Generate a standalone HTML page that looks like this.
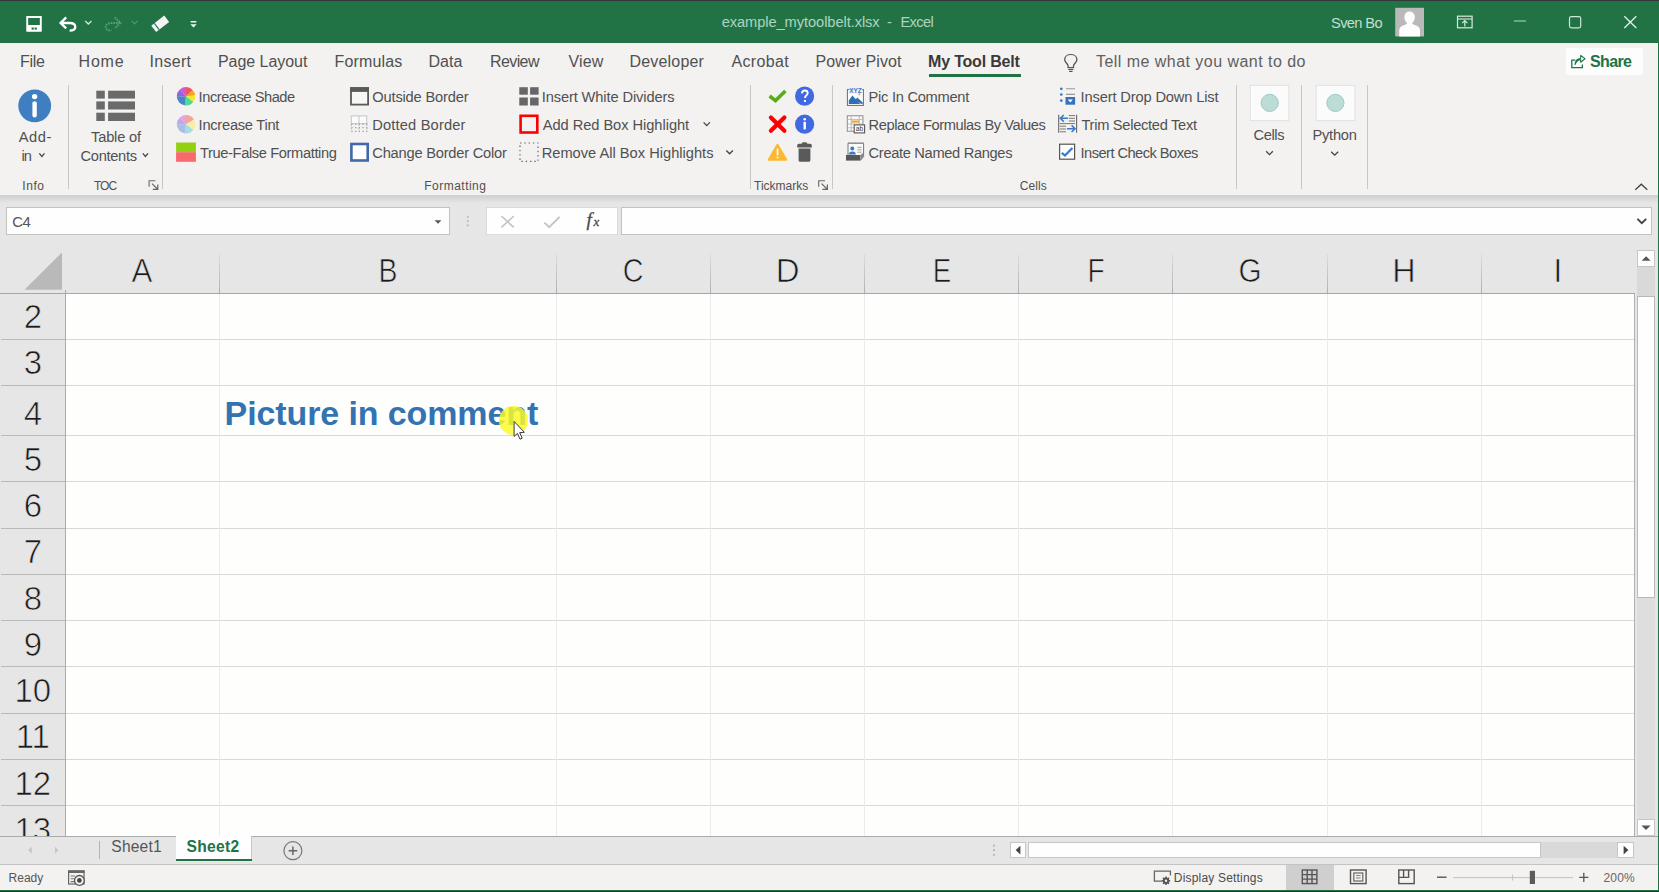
<!DOCTYPE html>
<html><head><meta charset="utf-8"><title>example_mytoolbelt.xlsx - Excel</title>
<style>
html,body{margin:0;padding:0;}
body{width:1659px;height:892px;overflow:hidden;position:relative;background:#e6e6e6;font-family:"Liberation Sans",sans-serif;}
.a{position:absolute;}
.t{position:absolute;white-space:nowrap;line-height:1;}
.c{position:absolute;white-space:nowrap;line-height:1;text-align:center;width:80px;color:#1a1a1a;-webkit-text-stroke:0.7px #e6e6e6;}
svg{position:absolute;overflow:visible;}
</style></head><body>
<div class="a" style="left:0px;top:0px;width:1659px;height:43px;background:#217346;"></div>
<div class="a" style="left:0px;top:0px;width:1659px;height:1px;background:#33363b;"></div>
<div class="a" style="left:0px;top:43px;width:1659px;height:152px;background:#f3f2f1;"></div>
<div class="a" style="left:0px;top:195px;width:1659px;height:8px;background:linear-gradient(#d0d0d0,#d4d4d4 25%,#e6e6e6);"></div>
<div class="a" style="left:1566px;top:48px;width:77px;height:27px;background:#fdfdfd;border-radius:2px;"></div>
<div class="a" style="left:929px;top:74px;width:92px;height:3px;background:#217346;"></div>
<div class="a" style="left:68px;top:85px;width:1px;height:104px;background:#c8c6c4;"></div>
<div class="a" style="left:162px;top:85px;width:1px;height:104px;background:#c8c6c4;"></div>
<div class="a" style="left:750px;top:85px;width:1px;height:104px;background:#c8c6c4;"></div>
<div class="a" style="left:832px;top:85px;width:1px;height:104px;background:#c8c6c4;"></div>
<div class="a" style="left:1236px;top:85px;width:1px;height:104px;background:#c8c6c4;"></div>
<div class="a" style="left:1301px;top:85px;width:1px;height:104px;background:#c8c6c4;"></div>
<div class="a" style="left:1367px;top:85px;width:1px;height:104px;background:#c8c6c4;"></div>
<div class="a" style="left:6px;top:207px;width:444px;height:28px;background:#fefefe;border:1px solid #c2c2c2;box-sizing:border-box;"></div>
<div class="a" style="left:486px;top:207px;width:132px;height:28px;background:#fefefe;border:1px solid #dadada;box-sizing:border-box;"></div>
<div class="a" style="left:621px;top:207px;width:1031px;height:28px;background:#fefefe;border:1px solid #c2c2c2;box-sizing:border-box;"></div>
<div class="a" style="left:66px;top:294px;width:1568px;height:542px;background:#fefefd;"></div>
<div class="a" style="left:66px;top:339px;width:1568px;height:1px;background:#d9d9d9;"></div>
<div class="a" style="left:1px;top:339px;width:64px;height:1px;background:#b9b9b9;"></div>
<div class="a" style="left:66px;top:385px;width:1568px;height:1px;background:#d9d9d9;"></div>
<div class="a" style="left:1px;top:385px;width:64px;height:1px;background:#b9b9b9;"></div>
<div class="a" style="left:66px;top:435px;width:1568px;height:1px;background:#d9d9d9;"></div>
<div class="a" style="left:1px;top:435px;width:64px;height:1px;background:#b9b9b9;"></div>
<div class="a" style="left:66px;top:481px;width:1568px;height:1px;background:#d9d9d9;"></div>
<div class="a" style="left:1px;top:481px;width:64px;height:1px;background:#b9b9b9;"></div>
<div class="a" style="left:66px;top:528px;width:1568px;height:1px;background:#d9d9d9;"></div>
<div class="a" style="left:1px;top:528px;width:64px;height:1px;background:#b9b9b9;"></div>
<div class="a" style="left:66px;top:574px;width:1568px;height:1px;background:#d9d9d9;"></div>
<div class="a" style="left:1px;top:574px;width:64px;height:1px;background:#b9b9b9;"></div>
<div class="a" style="left:66px;top:620px;width:1568px;height:1px;background:#d9d9d9;"></div>
<div class="a" style="left:1px;top:620px;width:64px;height:1px;background:#b9b9b9;"></div>
<div class="a" style="left:66px;top:666px;width:1568px;height:1px;background:#d9d9d9;"></div>
<div class="a" style="left:1px;top:666px;width:64px;height:1px;background:#b9b9b9;"></div>
<div class="a" style="left:66px;top:713px;width:1568px;height:1px;background:#d9d9d9;"></div>
<div class="a" style="left:1px;top:713px;width:64px;height:1px;background:#b9b9b9;"></div>
<div class="a" style="left:66px;top:759px;width:1568px;height:1px;background:#d9d9d9;"></div>
<div class="a" style="left:1px;top:759px;width:64px;height:1px;background:#b9b9b9;"></div>
<div class="a" style="left:66px;top:805px;width:1568px;height:1px;background:#d9d9d9;"></div>
<div class="a" style="left:1px;top:805px;width:64px;height:1px;background:#b9b9b9;"></div>
<div class="a" style="left:219px;top:294px;width:1px;height:542px;background:#ebebeb;"></div>
<div class="a" style="left:219px;top:254px;width:1px;height:39px;background:linear-gradient(#dcdcdc,#b0b0b0);"></div>
<div class="a" style="left:556px;top:294px;width:1px;height:542px;background:#ebebeb;"></div>
<div class="a" style="left:556px;top:254px;width:1px;height:39px;background:linear-gradient(#dcdcdc,#b0b0b0);"></div>
<div class="a" style="left:710px;top:294px;width:1px;height:542px;background:#ebebeb;"></div>
<div class="a" style="left:710px;top:254px;width:1px;height:39px;background:linear-gradient(#dcdcdc,#b0b0b0);"></div>
<div class="a" style="left:864px;top:294px;width:1px;height:542px;background:#ebebeb;"></div>
<div class="a" style="left:864px;top:254px;width:1px;height:39px;background:linear-gradient(#dcdcdc,#b0b0b0);"></div>
<div class="a" style="left:1018px;top:294px;width:1px;height:542px;background:#ebebeb;"></div>
<div class="a" style="left:1018px;top:254px;width:1px;height:39px;background:linear-gradient(#dcdcdc,#b0b0b0);"></div>
<div class="a" style="left:1172px;top:294px;width:1px;height:542px;background:#ebebeb;"></div>
<div class="a" style="left:1172px;top:254px;width:1px;height:39px;background:linear-gradient(#dcdcdc,#b0b0b0);"></div>
<div class="a" style="left:1327px;top:294px;width:1px;height:542px;background:#ebebeb;"></div>
<div class="a" style="left:1327px;top:254px;width:1px;height:39px;background:linear-gradient(#dcdcdc,#b0b0b0);"></div>
<div class="a" style="left:1481px;top:294px;width:1px;height:542px;background:#ebebeb;"></div>
<div class="a" style="left:1481px;top:254px;width:1px;height:39px;background:linear-gradient(#dcdcdc,#b0b0b0);"></div>
<div class="a" style="left:0px;top:293px;width:1635px;height:1px;background:#a6a6a6;"></div>
<div class="a" style="left:65px;top:290px;width:1px;height:546px;background:#ababab;"></div>
<div class="a" style="left:1634px;top:294px;width:1px;height:542px;background:#b0b0b0;"></div>
<svg style="left:0;top:0" width="70" height="295"><polygon points="24.5,289.8 62,252.4 62,289.8" fill="#b9b9b9"/></svg>
<span class="c" style="left:102.4px;top:254.0px;font-size:33.00px;transform:scaleX(0.95);">A</span>
<span class="c" style="left:347.8px;top:254.0px;font-size:33.00px;transform:scaleX(0.86);">B</span>
<span class="c" style="left:593.4px;top:254.0px;font-size:33.00px;transform:scaleX(0.87);">C</span>
<span class="c" style="left:747.6px;top:254.0px;font-size:33.00px;transform:scaleX(1.00);">D</span>
<span class="c" style="left:901.8px;top:254.0px;font-size:33.00px;transform:scaleX(0.84);">E</span>
<span class="c" style="left:1055.9px;top:254.0px;font-size:33.00px;transform:scaleX(0.85);">F</span>
<span class="c" style="left:1210.2px;top:254.0px;font-size:33.00px;transform:scaleX(0.90);">G</span>
<span class="c" style="left:1364.4px;top:254.0px;font-size:33.00px;transform:scaleX(0.98);">H</span>
<span class="c" style="left:1517.9px;top:254.0px;font-size:33.00px;transform:scaleX(1.00);">I</span>
<span class="c" style="left:-7.2px;top:300.0px;font-size:33.00px;">2</span>
<span class="c" style="left:-7.2px;top:346.0px;font-size:33.00px;">3</span>
<span class="c" style="left:-7.2px;top:397.0px;font-size:33.00px;">4</span>
<span class="c" style="left:-7.2px;top:443.0px;font-size:33.00px;">5</span>
<span class="c" style="left:-7.2px;top:489.0px;font-size:33.00px;">6</span>
<span class="c" style="left:-7.2px;top:535.0px;font-size:33.00px;">7</span>
<span class="c" style="left:-7.2px;top:582.0px;font-size:33.00px;">8</span>
<span class="c" style="left:-7.2px;top:628.0px;font-size:33.00px;">9</span>
<span class="c" style="left:-7.2px;top:674.0px;font-size:33.00px;">10</span>
<span class="c" style="left:-7.2px;top:720.0px;font-size:33.00px;">11</span>
<span class="c" style="left:-7.2px;top:767.0px;font-size:33.00px;">12</span>
<span class="c" style="left:-7.2px;top:813.0px;font-size:33.00px;">13</span>
<div class="a" style="left:0px;top:836px;width:1659px;height:28px;background:#e6e6e6;"></div>
<div class="a" style="left:0px;top:836px;width:1659px;height:1px;background:#ababab;"></div>
<div class="a" style="left:0px;top:864px;width:1659px;height:26px;background:#f3f2f1;"></div>
<div class="a" style="left:0px;top:864px;width:1659px;height:1px;background:#c4c4c4;"></div>
<div class="a" style="left:176px;top:836px;width:75px;height:23px;background:#fefefe;border-right:1px solid #c8c8c8;"></div>
<div class="a" style="left:176px;top:859px;width:76px;height:2px;background:#217346;"></div>
<div class="a" style="left:99px;top:841px;width:1px;height:18px;background:#b3b3b3;"></div>
<div class="a" style="left:1286px;top:865px;width:48px;height:25px;background:#cfcfcf;"></div>
<div class="a" style="left:1010px;top:842px;width:16px;height:16px;background:#fefefe;border:1px solid #c6c6c6;box-sizing:border-box;"></div>
<div class="a" style="left:1028px;top:842px;width:513px;height:16px;background:#fefefe;border:1px solid #c6c6c6;box-sizing:border-box;"></div>
<div class="a" style="left:1541px;top:842px;width:76px;height:16px;background:#d9d9d9;"></div>
<div class="a" style="left:1617px;top:842px;width:17px;height:16px;background:#fefefe;border:1px solid #c6c6c6;box-sizing:border-box;"></div>
<div class="a" style="left:1635px;top:250px;width:22px;height:586px;background:#e6e6e6;"></div>
<div class="a" style="left:1637px;top:250px;width:18px;height:17px;background:#fefefe;border:1px solid #c6c6c6;box-sizing:border-box;"></div>
<div class="a" style="left:1637px;top:267px;width:18px;height:29px;background:#d9d9d9;"></div>
<div class="a" style="left:1637px;top:296px;width:18px;height:302px;background:#fefefe;border:1px solid #b9b9b9;box-sizing:border-box;"></div>
<div class="a" style="left:1637px;top:598px;width:18px;height:221px;background:#dedede;"></div>
<div class="a" style="left:1637px;top:819px;width:18px;height:17px;background:#fefefe;border:1px solid #c6c6c6;box-sizing:border-box;"></div>
<div class="a" style="left:1658px;top:43px;width:1px;height:849px;background:#217346;"></div>
<div class="a" style="left:0px;top:890px;width:1659px;height:1px;background:#217346;"></div>
<div class="a" style="left:0px;top:891px;width:1659px;height:1px;background:#2d2e33;"></div>
<!-- title bar icons -->
<svg style="left:0;top:0" width="220" height="43" viewBox="0 0 220 43" fill="none">
<!-- save -->
<rect x="27.2" y="17" width="13.6" height="13.6" stroke="#fff" stroke-width="1.9"/>
<path d="M27,25 H41 V31.5 H27 Z M31.6,27.6 V30.6 H33.8 V27.6 Z M34.6,27.6 V30.6 H36.8 V27.6 Z" fill="#fff" fill-rule="evenodd"/>
<!-- undo -->
<path d="M66.2,17.4 L60.6,23 L66.2,28.4 M60.8,23 H69.5 C74,23 75.3,25.4 75.3,27 C75.3,29 73.6,30.6 69.6,30.6" stroke="#fff" stroke-width="2.3" stroke-linejoin="miter"/>
<path d="M85.2,21 L88.3,24 L91.5,21" stroke="#d4e8dc" stroke-width="1.3"/>
<!-- redo (disabled) -->
<path d="M114.8,17.4 L120.4,23 L114.8,28.4 M120.2,23 H111.5 C107,23 105.7,25.4 105.7,27 C105.7,29 107.4,30.6 111.4,30.6" stroke="#5d9f7b" stroke-width="2" stroke-dasharray="1.6 1"/>
<path d="M131.6,21 L134.5,23.8 L137.4,21" stroke="#4d9370" stroke-width="1.2"/>
<!-- eraser -->
<g transform="rotate(-38 160 24)"><rect x="152" y="20" width="16.5" height="8" fill="#f4f4f4"/><rect x="155.3" y="20" width="1.1" height="8" fill="#217346"/></g>
<!-- customize -->
<rect x="190.6" y="21" width="5.8" height="1.5" fill="#eef6f1"/>
<path d="M190.3,24.2 H196.7 L193.5,27.5 Z" fill="#eef6f1"/>
</svg>
<svg style="left:1390px;top:0" width="269" height="43" viewBox="1390 0 269 43" fill="none">
<!-- avatar -->
<rect x="1395.2" y="7.8" width="28.8" height="28.6" fill="#b9b9b9"/>
<path d="M1409.6,11.6 c3.4,0 5.2,2.6 5.2,5.6 c0,2.6 -1.2,4.6 -2.6,5.6 c0,1.2 0.6,1.6 2.4,2.2 c3.4,1.1 5.2,2.2 5.4,5.4 v6 h-20.8 v-6 c0.2,-3.2 2,-4.3 5.4,-5.4 c1.8,-0.6 2.4,-1 2.4,-2.2 c-1.4,-1 -2.6,-3 -2.6,-5.6 c0,-3 1.8,-5.6 5.2,-5.6 z" fill="#fdfdfd"/>
<!-- ribbon display options -->
<rect x="1457.5" y="16.2" width="14.6" height="11.6" stroke="#d6eadd" stroke-width="1.2"/>
<path d="M1457.5,19 H1472" stroke="#d6eadd" stroke-width="1.1"/>
<path d="M1464.8,26.5 V20.8 M1462.2,23.2 L1464.8,20.6 L1467.4,23.2" stroke="#d6eadd" stroke-width="1.2"/>
<!-- min -->
<path d="M1513.8,21 H1526" stroke="#a9d0b8" stroke-width="1.1"/>
<!-- max -->
<rect x="1569.5" y="16.6" width="11.2" height="11.2" rx="1.8" stroke="#cfe6d8" stroke-width="1.2"/>
<!-- close -->
<path d="M1624.3,16.3 L1636.3,28 M1636.3,16.3 L1624.3,28" stroke="#e3f1e9" stroke-width="1.3"/>
</svg>
<!-- tab row icons -->
<svg style="left:1055px;top:45px" width="40" height="34" viewBox="1055 45 40 34" fill="none">
<g transform="translate(0.8,71.9) scale(1,0.925) translate(0,-71.9)"><path d="M1067.3,67.2 v-1.6 c0,-1.3 -0.7,-2.2 -1.7,-3.3 c-1,-1.1 -1.7,-2.3 -1.7,-3.8 c0,-3.3 2.8,-5.4 6.1,-5.4 c3.3,0 6.1,2.1 6.1,5.4 c0,1.5 -0.7,2.7 -1.7,3.8 c-1,1.1 -1.7,2 -1.7,3.3 v1.6 z" stroke="#555" stroke-width="1.3"/>
<path d="M1067.5,69.3 h5 M1068.3,71.4 h3.4" stroke="#555" stroke-width="1.3"/></g>
</svg>
<svg style="left:1566px;top:48px" width="30" height="27" viewBox="1566 48 30 27" fill="none">
<path d="M1575.4,60.2 H1571.8 V67.6 H1582.4 V64.4" stroke="#217346" stroke-width="1.3"/>
<path d="M1575,64.6 c0.3,-3.8 2.3,-5.8 5.7,-6 v-3.2 l4.3,3.3 l-4.3,3.5 v-2.4 c-2.6,0 -4.2,1.6 -5.7,4.8 z" stroke="#217346" stroke-width="1.1" stroke-linejoin="round"/>
</svg>
<svg style="left:0;top:80px" width="1659" height="115" viewBox="0 80 1659 115" fill="none">
<circle cx="34.7" cy="105.8" r="16.4" fill="#3f7fc1"/><circle cx="34.6" cy="96.6" r="2.7" fill="#fff"/><rect x="32.4" y="101.2" width="4.4" height="16.4" rx="2.1" fill="#fff"/>
<path d="M39.3,153.4 L41.9,156.4 L44.5,153.4" stroke="#444" stroke-width="1.3"/>
<path d="M142.8,153.4 L145.4,156.4 L148.0,153.4" stroke="#444" stroke-width="1.3"/>
<path d="M703.6,122.4 L706.7,125.6 L709.8,122.4" stroke="#444" stroke-width="1.3"/>
<path d="M726.3,150.5 L729.6,153.8 L732.9,150.5" stroke="#444" stroke-width="1.3"/>
<path d="M1266.2,151.3 L1269.5,154.6 L1272.8,151.3" stroke="#444" stroke-width="1.3"/>
<path d="M1331.2,151.8 L1334.7,155.2 L1338.2,151.8" stroke="#444" stroke-width="1.3"/>
<path d="M1635.3,189.8 L1641.3,184.2 L1647.3,189.8" stroke="#444" stroke-width="1.3"/>
<rect x="96.3" y="90.7" width="8.5" height="7.9" fill="#6a6a6a"/><rect x="108.1" y="90.7" width="26.9" height="7.9" fill="#6a6a6a"/><rect x="96.3" y="101.4" width="8.5" height="8.1" fill="#6a6a6a"/><rect x="108.1" y="101.4" width="26.9" height="8.1" fill="#6a6a6a"/><rect x="96.3" y="112.7" width="8.5" height="8.3" fill="#6a6a6a"/><rect x="108.1" y="112.7" width="26.9" height="8.3" fill="#6a6a6a"/>
<path d="M149.1,186.7 V180.7 H155.4" stroke="#666" stroke-width="1.1"/><path d="M152.0,183.6 L157.4,189.0 M157.8,184.4 V189.4 H152.8" stroke="#666" stroke-width="1.2"/>
<path d="M818.7,186.7 V180.7 H825.0" stroke="#666" stroke-width="1.1"/><path d="M821.6,183.6 L827.0,189.0 M827.4,184.4 V189.4 H822.4" stroke="#666" stroke-width="1.2"/>
<path d="M186.00,96.30 L186.00,87.10 A9.20,9.20 0 0 1 192.84,90.14 Z" fill="#f4575a"/><path d="M186.00,96.30 L192.84,90.14 A9.20,9.20 0 0 1 195.16,95.50 Z" fill="#f9a21a"/><path d="M186.00,96.30 L195.16,95.50 A9.20,9.20 0 0 1 193.25,101.96 Z" fill="#f8e42c"/><path d="M186.00,96.30 L193.25,101.96 A9.20,9.20 0 0 1 184.72,105.41 Z" fill="#4fdc8c"/><path d="M186.00,96.30 L184.72,105.41 A9.20,9.20 0 0 1 176.80,96.30 Z" fill="#4a86c6"/><path d="M186.00,96.30 L176.80,96.30 A9.20,9.20 0 0 1 179.84,89.46 Z" fill="#9a5ee0"/><path d="M186.00,96.30 L179.84,89.46 A9.20,9.20 0 0 1 186.00,87.10 Z" fill="#d455de"/>
<path d="M186.00,124.30 L186.00,115.10 A9.20,9.20 0 0 1 193.97,119.70 Z" fill="#f4a59d"/><path d="M186.00,124.30 L193.97,119.70 A9.20,9.20 0 0 1 193.25,129.96 Z" fill="#f8efa4"/><path d="M186.00,124.30 L193.25,129.96 A9.20,9.20 0 0 1 184.72,133.41 Z" fill="#a9dce0"/><path d="M186.00,124.30 L184.72,133.41 A9.20,9.20 0 0 1 176.80,124.30 Z" fill="#a6bfe6"/><path d="M186.00,124.30 L176.80,124.30 A9.20,9.20 0 0 1 179.84,117.46 Z" fill="#c9a3ea"/><path d="M186.00,124.30 L179.84,117.46 A9.20,9.20 0 0 1 186.00,115.10 Z" fill="#e0a4e2"/>
<rect x="176.1" y="142.5" width="19.8" height="9.8" fill="#92d010"/><rect x="176.1" y="152.2" width="19.8" height="9.6" fill="#f8696b"/>
<rect x="351" y="88.1" width="17.1" height="16.5" stroke="#5a5a5a" stroke-width="1.8" fill="#f7f7f6"/><rect x="350.1" y="87.2" width="18.9" height="4.7" fill="#5a5a5a"/>
<rect x="351.3" y="115.9" width="15.4" height="7.8" fill="#fbfbfb" stroke="#c6c6c6" stroke-width="1"/><path d="M359,116 V123.6" stroke="#c6c6c6" stroke-width="1"/><path d="M351.3,124 H367.4 M351.3,127.7 H367.4 M351.3,131.3 H367.4" stroke="#8a8a8a" stroke-width="1" stroke-dasharray="1.3 2.4"/><path d="M351.3,124.6 V131 M359,124.6 V131 M366.9,124.6 V131" stroke="#a5a5a5" stroke-width="1" stroke-dasharray="1.2 2.4"/>
<rect x="351.4" y="144" width="16.3" height="16.5" stroke="#4169a8" stroke-width="2.6" fill="#fff"/>
<rect x="519.3" y="87.2" width="8.5" height="7.5" fill="#666"/><rect x="519.3" y="97.5" width="8.5" height="8.0" fill="#666"/><rect x="530.1" y="87.2" width="8.5" height="7.5" fill="#666"/><rect x="530.1" y="97.5" width="8.5" height="8.0" fill="#666"/>
<rect x="520.6" y="115.8" width="16.7" height="16.7" stroke="#fe0000" stroke-width="2.6"/>
<rect x="520" y="143" width="18" height="18.4" stroke="#666" stroke-width="1.2" stroke-dasharray="1.4 2.9"/>
<path d="M769.6,96 L775.5,100.6 L785.4,91" stroke="#58ae14" stroke-width="3.6" stroke-linejoin="miter"/>
<circle cx="804.6" cy="96.1" r="9.6" fill="#4169e1"/><path d="M801.9,93.3 c0.2,-2 1.4,-2.8 2.9,-2.8 c1.7,0 2.9,1 2.9,2.5 c0,2.4 -2.7,2.4 -2.7,5" stroke="#fff" stroke-width="1.9"/><circle cx="805" cy="100.9" r="1.2" fill="#fff"/>
<path d="M770.9,117.4 L784.4,130.8 M784.4,117.4 L770.9,130.8" stroke="#fe0000" stroke-width="4.2" stroke-linecap="round"/>
<circle cx="804.6" cy="124.2" r="9.6" fill="#4169e1"/><circle cx="804.7" cy="119.2" r="1.3" fill="#fff"/><rect x="803.5" y="121.8" width="2.4" height="7.6" rx="0.6" fill="#fff"/>
<path d="M777.5,145 L786,159.6 H769 Z" fill="#fbb832" stroke="#fbb832" stroke-width="2.4" stroke-linejoin="round"/><rect x="776.7" y="148.6" width="1.7" height="6.6" fill="#fff"/><rect x="776.7" y="156.6" width="1.7" height="1.8" fill="#fff"/>
<path d="M797.2,147.4 v-2 q0,-1.6 1.6,-1.6 h2.8 q0.2,-1.5 1.6,-1.5 h2.6 q1.4,0 1.6,1.5 h2.8 q1.6,0 1.6,1.6 v2 z M798.6,148.6 h11.8 v11.6 q0,1.6 -1.6,1.6 h-8.6 q-1.6,0 -1.6,-1.6 z" fill="#5a5a5a"/>
<rect x="847.4" y="89.6" width="16" height="15.8" fill="#fdfdfd" stroke="#6a6a6a" stroke-width="1"/><text x="855.4" y="92.6" text-anchor="middle" font-family="Liberation Sans, sans-serif" font-size="6.4" font-weight="700" fill="#3a78c8" stroke="#f3f2f1" stroke-width="1.6" paint-order="stroke">XYZ</text><path d="M848.8,104 V100.4 L852.4,95.6 L860.2,104 Z" fill="#2f6db5"/><path d="M855.2,100 L857.4,97.6 L862.6,102.6 V104 H861.4 Z" fill="#2f6db5"/><circle cx="859.4" cy="94.3" r="1" fill="#f0a030"/>
<rect x="847.3" y="115.8" width="15.6" height="15.4" fill="#fbfbfb" stroke="#8a8a8a" stroke-width="1"/><path d="M847.3,119.4 H863 M847.3,124 H863 M847.3,127.8 H855 M851.2,115.8 V131.2 M859.4,115.8 V124" stroke="#b5b5b5" stroke-width="0.9"/><rect x="851.6" y="120.5" width="7.4" height="2.1" fill="#f0a030"/><rect x="854.2" y="124.9" width="10.4" height="8" fill="#fdfdfd" stroke="#555" stroke-width="1.1"/><text x="859.4" y="131.4" text-anchor="middle" font-family="Liberation Sans, sans-serif" font-size="6.6" fill="#333">ab</text>
<path d="M848,155 V143.2 H863.6 V156.6 L860.4,160.4" stroke="#777" stroke-width="1" fill="#fbfbfb"/><path d="M848,143.2 H863.6" stroke="#888" stroke-width="1.4" stroke-dasharray="1 0.8"/><circle cx="852.3" cy="148.4" r="2" fill="#3a78c8"/><path d="M848.8,154.6 q0,-3 3.5,-3 q3.5,0 3.5,3 z" fill="#3a78c8"/><path d="M857.4,147.4 H861.6 M857.4,149.8 H861.6 M857.4,152.2 H861.6" stroke="#999" stroke-width="0.9"/><path d="M846,155 H860.4 V160.6 H846 Z" fill="#575757"/><path d="M860.4,155 L863.6,152.6 V156.8 L860.4,160.6 Z" fill="#8a8a8a"/>
<circle cx="1061.3" cy="88.8" r="1.35" fill="#3a78c8"/><circle cx="1061.3" cy="94.5" r="1.35" fill="#3a78c8"/><circle cx="1061.3" cy="100.6" r="1.35" fill="#3a78c8"/><path d="M1066,88.8 H1075 M1066,94.4 H1075" stroke="#9a9a9a" stroke-width="1.1"/><rect x="1065.5" y="97" width="9.6" height="7.7" fill="#3572bd"/><path d="M1067.8,99.6 H1072.8 L1070.3,102.4 Z" fill="#fff"/>
<path d="M1058.7,114.8 V132.7 M1076.6,114.8 V132.7" stroke="#666" stroke-width="1.1"/><path d="M1068.8,115.6 H1075 M1068.8,118.3 H1075 M1068.8,121 H1075 M1060,123.6 H1075 M1060,126.2 H1066 M1060,129 H1066 M1060,131.8 H1066" stroke="#777" stroke-width="1"/><path d="M1068,118.3 H1060.6 M1063.8,115 L1060.4,118.3 L1063.8,121.6" stroke="#3a78c8" stroke-width="1.6"/><path d="M1067,128.7 H1074.8 M1071.6,125.4 L1075,128.7 L1071.6,132" stroke="#3a78c8" stroke-width="1.6"/>
<rect x="1059.6" y="144.2" width="15" height="15" fill="#fdfdfd" stroke="#555" stroke-width="1.2"/><path d="M1061.8,152.8 L1065,155.6 L1072.4,148" stroke="#3a78c8" stroke-width="2.2"/>
<rect x="1250.3" y="85.4" width="38.5" height="35.2" fill="#fbfbfb" stroke="#e1e1e1" stroke-width="1"/><circle cx="1269.7" cy="102.9" r="8.6" fill="#bcdcd6" stroke="#9ccdc2" stroke-width="1"/><rect x="1316.2" y="85.4" width="38.8" height="35.2" fill="#fbfbfb" stroke="#e1e1e1" stroke-width="1"/><circle cx="1335.4" cy="102.9" r="8.6" fill="#bcdcd6" stroke="#9ccdc2" stroke-width="1"/>
</svg>
<!-- formula bar icons -->
<svg style="left:0;top:200px" width="1659" height="45" viewBox="0 200 1659 45" fill="none">
<path d="M434.6,220.2 H441.4 L438,223.7 Z" fill="#555"/>
<circle cx="467.8" cy="217" r="1.1" fill="#bdbdbd"/><circle cx="467.8" cy="221.2" r="1.1" fill="#bdbdbd"/><circle cx="467.8" cy="225.4" r="1.1" fill="#bdbdbd"/>
<path d="M501.4,216 L513.8,227.4 M513.8,216 L501.4,227.4" stroke="#c3c3c3" stroke-width="1.6"/>
<path d="M544.4,222.6 L549.2,227.2 L559.6,216.8" stroke="#c3c3c3" stroke-width="1.9"/>
<text x="586.4" y="226" font-family="Liberation Serif, serif" font-style="italic" font-weight="400" font-size="19" fill="#4a4a4a" stroke="#4a4a4a" stroke-width="0.3">f</text><text x="593.6" y="226.4" font-family="Liberation Serif, serif" font-style="italic" font-weight="400" font-size="13" fill="#4a4a4a" stroke="#4a4a4a" stroke-width="0.3">x</text>
<path d="M1637.4,218.8 L1641.8,223.2 L1646.2,218.8" stroke="#444" stroke-width="1.9"/>
</svg>
<!-- scrollbar arrows -->
<svg style="left:1000px;top:240px" width="659" height="652" viewBox="1000 240 659 652" fill="none">
<path d="M1641.6,260.8 H1650.6 L1646.1,256.2 Z" fill="#555"/>
<path d="M1641.4,825.4 H1650.6 L1646,830 Z" fill="#555"/>
<path d="M1020.4,845.8 V854.4 L1015.6,850.1 Z" fill="#444"/>
<path d="M1623.6,845.8 V854.4 L1628.4,850.1 Z" fill="#444"/>
<circle cx="994" cy="845.6" r="1.1" fill="#b5b5b5"/><circle cx="994" cy="850.2" r="1.1" fill="#b5b5b5"/><circle cx="994" cy="854.8" r="1.1" fill="#b5b5b5"/>
</svg>
<!-- sheet tab bar icons -->
<svg style="left:0;top:836px" width="320" height="56" viewBox="0 836 320 56" fill="none">
<path d="M31.8,846.8 V853.6 L28.2,850.2 Z" fill="#c6c6c6"/>
<path d="M55,846.8 V853.6 L58.4,850.2 Z" fill="#c6c6c6"/>
<circle cx="292.9" cy="850.7" r="9" stroke="#777" stroke-width="1.2"/>
<path d="M288.6,850.7 H297.2 M292.9,846.4 V855" stroke="#666" stroke-width="1.5"/>
<!-- macro record icon -->
<rect x="68.6" y="871" width="15.4" height="13" stroke="#666" stroke-width="1.2" fill="#f3f2f1"/>
<rect x="68" y="870.4" width="16.6" height="2.6" fill="#666"/>
<path d="M70.6,876 H75 M70.6,878.8 H74 M70.6,881.6 H74" stroke="#777" stroke-width="1.1"/>
<circle cx="79.4" cy="880.4" r="4.9" fill="#f3f2f1" stroke="#555" stroke-width="1.3"/><circle cx="79.4" cy="880.4" r="2.3" fill="#444"/>
</svg>
<!-- status bar right icons -->
<svg style="left:1140px;top:862px" width="519" height="30" viewBox="1140 862 519 30" fill="none">
<path d="M1162,881.2 H1154.4 V871.2 H1170.4 V875.4" stroke="#666" stroke-width="1.3"/>
<circle cx="1166" cy="880.8" r="3.2" fill="#555"/><circle cx="1166" cy="880.8" r="1.1" fill="#f3f2f1"/>
<path d="M1166,876.6 V885 M1161.8,880.8 H1170.2 M1163,877.8 L1169,883.8 M1169,877.8 L1163,883.8" stroke="#555" stroke-width="1.5"/>
<circle cx="1166" cy="880.8" r="1.2" fill="#f3f2f1"/>
<!-- normal view -->
<rect x="1302.3" y="870" width="14.6" height="13.6" stroke="#555" stroke-width="1.4"/>
<path d="M1307.2,870 V883.6 M1312,870 V883.6 M1302.3,874.6 H1316.9 M1302.3,879.1 H1316.9" stroke="#555" stroke-width="1.4"/>
<!-- page layout -->
<rect x="1350.5" y="870" width="15.6" height="13.6" stroke="#555" stroke-width="1.4"/>
<rect x="1353.8" y="873" width="9" height="8" stroke="#666" stroke-width="1.2"/>
<path d="M1356,875.6 H1360.6 M1356,878 H1360.6" stroke="#777" stroke-width="0.9"/>
<!-- page break -->
<rect x="1398.8" y="870" width="15.4" height="13.6" stroke="#555" stroke-width="1.4"/>
<path d="M1398.8,877.4 H1408.6 V870 M1403.6,870 V877.4" stroke="#555" stroke-width="1.4"/>
<!-- zoom -->
<path d="M1437,877.2 H1446.6" stroke="#555" stroke-width="1.4"/>
<path d="M1453,877.6 H1573" stroke="#c2c2c2" stroke-width="1"/>
<path d="M1512.6,874.6 V880.6" stroke="#c2c2c2" stroke-width="1"/>
<rect x="1529.8" y="870.8" width="5.2" height="13.2" fill="#5c5c5c"/>
<path d="M1579.2,877.4 H1588.4 M1583.8,872.8 V882" stroke="#555" stroke-width="1.3"/>
</svg>
<span class="t" id="t0" style="left:721.7px;top:15.0px;font-size:14.67px;font-weight:400;color:#aed4c0;letter-spacing:-0.077px;">example_mytoolbelt.xlsx</span>
<span class="t" id="t1" style="left:887.0px;top:15.0px;font-size:14.67px;font-weight:400;color:#aed4c0;letter-spacing:0.000px;">-</span>
<span class="t" id="t2" style="left:900.5px;top:15.0px;font-size:14.67px;font-weight:400;color:#aed4c0;letter-spacing:-0.675px;">Excel</span>
<span class="t" id="t3" style="left:1331.0px;top:16.0px;font-size:14.67px;font-weight:400;color:#c4dfd0;letter-spacing:-0.633px;">Sven Bo</span>
<span class="t" id="t4" style="left:20.0px;top:54.0px;font-size:16.00px;font-weight:400;color:#505050;letter-spacing:-0.333px;">File</span>
<span class="t" id="t5" style="left:78.5px;top:54.0px;font-size:16.00px;font-weight:400;color:#505050;letter-spacing:0.833px;">Home</span>
<span class="t" id="t6" style="left:149.5px;top:54.0px;font-size:16.00px;font-weight:400;color:#505050;letter-spacing:0.300px;">Insert</span>
<span class="t" id="t7" style="left:218.0px;top:54.0px;font-size:16.00px;font-weight:400;color:#505050;letter-spacing:-0.050px;">Page Layout</span>
<span class="t" id="t8" style="left:334.5px;top:54.0px;font-size:16.00px;font-weight:400;color:#505050;letter-spacing:0.143px;">Formulas</span>
<span class="t" id="t9" style="left:428.5px;top:54.0px;font-size:16.00px;font-weight:400;color:#505050;letter-spacing:0.000px;">Data</span>
<span class="t" id="t10" style="left:490.0px;top:54.0px;font-size:16.00px;font-weight:400;color:#505050;letter-spacing:-0.600px;">Review</span>
<span class="t" id="t11" style="left:568.5px;top:54.0px;font-size:16.00px;font-weight:400;color:#505050;letter-spacing:0.167px;">View</span>
<span class="t" id="t12" style="left:629.5px;top:54.0px;font-size:16.00px;font-weight:400;color:#505050;letter-spacing:0.188px;">Developer</span>
<span class="t" id="t13" style="left:731.5px;top:54.0px;font-size:16.00px;font-weight:400;color:#505050;letter-spacing:0.333px;">Acrobat</span>
<span class="t" id="t14" style="left:815.5px;top:54.0px;font-size:16.00px;font-weight:400;color:#505050;letter-spacing:0.050px;">Power Pivot</span>
<span class="t" id="t15" style="left:928.0px;top:54.0px;font-size:16.00px;font-weight:700;color:#3a3a3a;letter-spacing:-0.182px;">My Tool Belt</span>
<span class="t" id="t16" style="left:1096.0px;top:54.0px;font-size:16.00px;font-weight:400;color:#606060;letter-spacing:0.462px;">Tell me what you want to do</span>
<span class="t" id="t17" style="left:1590.0px;top:54.0px;font-size:16.00px;font-weight:700;color:#217346;letter-spacing:-0.625px;">Share</span>
<span class="t" id="t18" style="left:18.7px;top:130.0px;font-size:14.67px;font-weight:400;color:#505050;letter-spacing:0.600px;">Add-</span>
<span class="t" id="t19" style="left:21.5px;top:149.0px;font-size:14.67px;font-weight:400;color:#505050;letter-spacing:-0.900px;">in</span>
<span class="t" id="t20" style="left:91.0px;top:130.0px;font-size:14.67px;font-weight:400;color:#505050;letter-spacing:-0.171px;">Table of</span>
<span class="t" id="t21" style="left:80.5px;top:149.0px;font-size:14.67px;font-weight:400;color:#505050;letter-spacing:-0.300px;">Contents</span>
<span class="t" id="t22" style="left:198.6px;top:90.0px;font-size:14.67px;font-weight:400;color:#505050;letter-spacing:-0.469px;">Increase Shade</span>
<span class="t" id="t23" style="left:198.6px;top:118.0px;font-size:14.67px;font-weight:400;color:#505050;letter-spacing:-0.258px;">Increase Tint</span>
<span class="t" id="t24" style="left:200.0px;top:146.0px;font-size:14.67px;font-weight:400;color:#505050;letter-spacing:-0.375px;">True-False Formatting</span>
<span class="t" id="t25" style="left:372.3px;top:90.0px;font-size:14.67px;font-weight:400;color:#505050;letter-spacing:-0.177px;">Outside Border</span>
<span class="t" id="t26" style="left:372.3px;top:118.0px;font-size:14.67px;font-weight:400;color:#505050;letter-spacing:0.158px;">Dotted Border</span>
<span class="t" id="t27" style="left:372.3px;top:146.0px;font-size:14.67px;font-weight:400;color:#505050;letter-spacing:-0.217px;">Change Border Color</span>
<span class="t" id="t28" style="left:541.7px;top:90.0px;font-size:14.67px;font-weight:400;color:#505050;letter-spacing:-0.115px;">Insert White Dividers</span>
<span class="t" id="t29" style="left:542.7px;top:118.0px;font-size:14.67px;font-weight:400;color:#505050;letter-spacing:-0.050px;">Add Red Box Highlight</span>
<span class="t" id="t30" style="left:541.7px;top:146.0px;font-size:14.67px;font-weight:400;color:#505050;letter-spacing:-0.004px;">Remove All Box Highlights</span>
<span class="t" id="t31" style="left:868.6px;top:90.0px;font-size:14.67px;font-weight:400;color:#505050;letter-spacing:-0.277px;">Pic In Comment</span>
<span class="t" id="t32" style="left:868.6px;top:118.0px;font-size:14.67px;font-weight:400;color:#505050;letter-spacing:-0.424px;">Replace Formulas By Values</span>
<span class="t" id="t33" style="left:868.6px;top:146.0px;font-size:14.67px;font-weight:400;color:#505050;letter-spacing:-0.333px;">Create Named Ranges</span>
<span class="t" id="t34" style="left:1080.5px;top:90.0px;font-size:14.67px;font-weight:400;color:#505050;letter-spacing:-0.140px;">Insert Drop Down List</span>
<span class="t" id="t35" style="left:1081.5px;top:118.0px;font-size:14.67px;font-weight:400;color:#505050;letter-spacing:-0.294px;">Trim Selected Text</span>
<span class="t" id="t36" style="left:1080.5px;top:146.0px;font-size:14.67px;font-weight:400;color:#505050;letter-spacing:-0.541px;">Insert Check Boxes</span>
<span class="t" id="t37" style="left:1253.5px;top:128.0px;font-size:14.67px;font-weight:400;color:#505050;letter-spacing:-0.375px;">Cells</span>
<span class="t" id="t38" style="left:1312.4px;top:128.0px;font-size:14.67px;font-weight:400;color:#505050;letter-spacing:-0.220px;">Python</span>
<span class="t" id="t39" style="left:22.3px;top:180.0px;font-size:12.00px;font-weight:400;color:#505050;letter-spacing:0.567px;">Info</span>
<span class="t" id="t40" style="left:94.0px;top:180.0px;font-size:12.00px;font-weight:400;color:#505050;letter-spacing:-1.000px;">TOC</span>
<span class="t" id="t41" style="left:424.3px;top:180.0px;font-size:12.00px;font-weight:400;color:#505050;letter-spacing:0.478px;">Formatting</span>
<span class="t" id="t42" style="left:754.0px;top:180.0px;font-size:12.00px;font-weight:400;color:#505050;letter-spacing:0.000px;">Tickmarks</span>
<span class="t" id="t43" style="left:1019.8px;top:180.0px;font-size:12.00px;font-weight:400;color:#505050;letter-spacing:0.050px;">Cells</span>
<span class="t" id="t44" style="left:12.2px;top:215.0px;font-size:14.90px;font-weight:400;color:#555;letter-spacing:-0.400px;">C4</span>
<span class="t" id="t45" style="left:111.3px;top:839.0px;font-size:15.60px;font-weight:400;color:#555;letter-spacing:0.180px;">Sheet1</span>
<span class="t" id="t46" style="left:186.6px;top:839.0px;font-size:15.60px;font-weight:700;color:#217346;letter-spacing:0.300px;">Sheet2</span>
<span class="t" id="t47" style="left:8.5px;top:872.0px;font-size:12.00px;font-weight:400;color:#555;letter-spacing:0.025px;">Ready</span>
<span class="t" id="t48" style="left:1173.8px;top:872.0px;font-size:12.00px;font-weight:400;color:#4a4a4a;letter-spacing:0.187px;">Display Settings</span>
<span class="t" id="t49" style="left:1603.5px;top:872.0px;font-size:12.00px;font-weight:400;color:#666;letter-spacing:0.167px;">200%</span>
<span class="t" id="t50" style="left:224.6px;top:396.0px;font-size:34.00px;font-weight:700;color:#3473b1;letter-spacing:-0.112px;">Picture in comment</span>
<div class="a" style="left:499.3px;top:406.3px;width:28.4px;height:28.4px;border-radius:50%;background:rgba(250,250,40,.84);"></div>
<svg style="left:513px;top:420px" width="14" height="21" viewBox="0 0 14 21"><path d="M1.1,1.4 L1.1,16.4 L4.4,13.4 L7,19.2 L9.2,18.2 L6.7,12.6 L11.4,12.3 Z" fill="#fff" stroke="#3a3a3a" stroke-width="1" stroke-linejoin="round"/></svg>
</body></html>
